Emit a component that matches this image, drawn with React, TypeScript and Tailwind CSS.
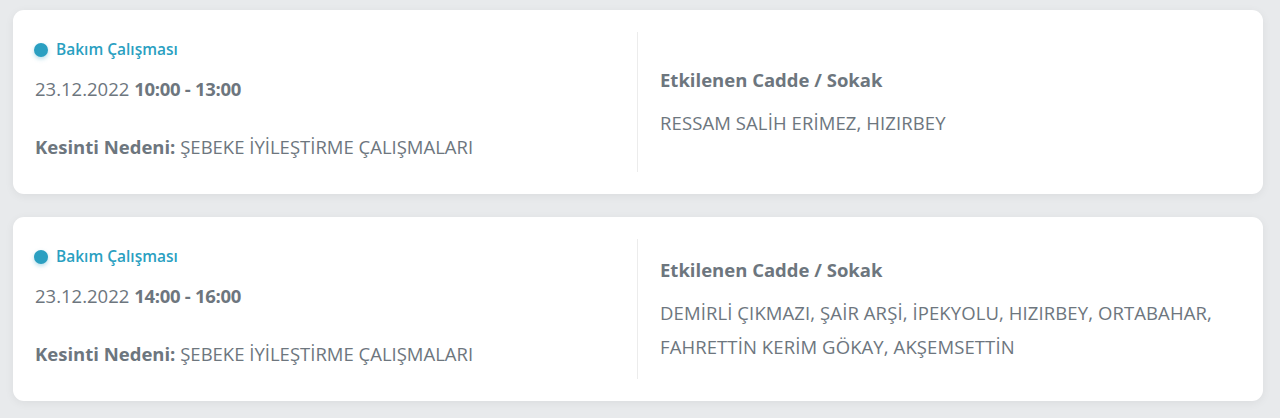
const OUTAGES = [
  {
    date: "23.12.2022",
    time: "10:00 - 13:00",
    reason: "ŞEBEKE İYİLEŞTİRME ÇALIŞMALARI",
    streets: "RESSAM SALİH ERİMEZ, HIZIRBEY",
  },
  {
    date: "23.12.2022",
    time: "14:00 - 16:00",
    reason: "ŞEBEKE İYİLEŞTİRME ÇALIŞMALARI",
    streets: "DEMİRLİ ÇIKMAZI, ŞAİR ARŞİ, İPEKYOLU, HIZIRBEY, ORTABAHAR, FAHRETTİN KERİM GÖKAY, AKŞEMSETTİN",
  },
];

export default function App() {
  return (
    <main
      className="min-h-[418px] bg-[#e8eaec] px-[13px] pt-[10px] pb-4 flex flex-col gap-[23px] text-[#6d767e]"
      style={{ fontFamily: '"Open Sans", "Noto Sans", sans-serif' }}
    >
      {OUTAGES.map((o, i) => (
        <div
          key={i}
          className="w-[1250px] h-[184px] bg-white rounded-[11px] shadow-[0_2px_10px_rgba(0,0,0,0.06)] flex py-[22px]"
        >
          <div className="w-[624px] pl-[22px] pt-[8px] flex flex-col">
            <div className="flex items-center gap-[8px] h-[20px] -ml-[1px]">
              <span className="w-[14px] h-[14px] rounded-full bg-[#2a9fc1] shadow-[0_2px_4px_rgba(42,159,193,0.35)]" />
              <span className="text-[15.5px] font-semibold text-[#2a9fc1]">Bakım Çalışması</span>
            </div>
            <div className="mt-[16px] text-[18.5px] leading-[26px]">
              {o.date} <b className="font-bold tracking-[-0.3px]">{o.time}</b>
            </div>
            <div className="mt-[32px] text-[18.5px] leading-[26px]">
              <b className="font-bold">Kesinti Nedeni:</b> {o.reason}
            </div>
          </div>
          <div className="w-px bg-[#ececec]" />
          <div className="flex-1 pl-[22px] pr-[40px] pt-[3px] flex flex-col justify-center">
            <div className="text-[18.5px] font-bold leading-[26px]">Etkilenen Cadde / Sokak</div>
            <div className="mt-[13px] text-[18.5px] leading-[34px] tracking-[0.1px]">{o.streets}</div>
          </div>
        </div>
      ))}
    </main>
  );
}
